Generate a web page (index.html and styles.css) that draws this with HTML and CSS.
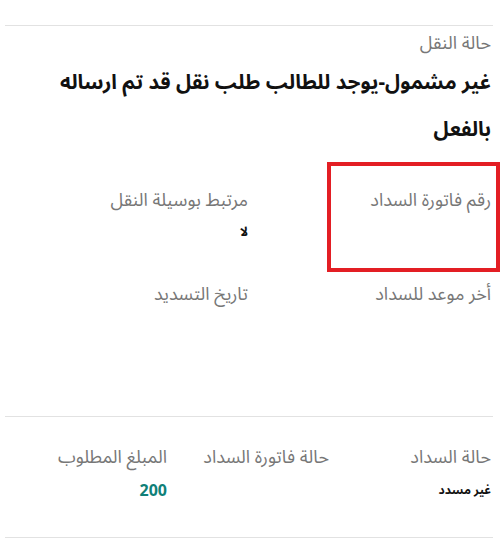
FILE: index.html
```html
<!DOCTYPE html>
<html lang="ar" dir="rtl">

<head>
    <meta charset="UTF-8">
    <meta name="viewport" content="width=device-width, initial-scale=1.0">
    <title>حالة النقل</title>
    <link rel="stylesheet" href="styles.css">
</head>

<body>

    <div class="page">

        <!-- بيانات النقل -->
        <section class="block transfer">
            <div class="field">
                <p class="label">حالة النقل</p>
                <h2 class="headline">غير مشمول-يوجد للطالب طلب نقل قد تم ارساله بالفعل</h2>
            </div>

            <div class="grid two">
                <div class="field">
                    <p class="label">رقم فاتورة السداد</p>
                    <p class="value"></p>
                </div>
                <div class="field">
                    <p class="label">مرتبط بوسيلة النقل</p>
                    <p class="value">لا</p>
                </div>
                <div class="field">
                    <p class="label">أخر موعد للسداد</p>
                    <p class="value"></p>
                </div>
                <div class="field">
                    <p class="label">تاريخ التسديد</p>
                    <p class="value"></p>
                </div>
            </div>
        </section>

        <!-- بيانات السداد -->
        <section class="block payment">
            <div class="grid three">
                <div class="field">
                    <p class="label">حالة السداد</p>
                    <p class="value small">غير مسدد</p>
                </div>
                <div class="field">
                    <p class="label">حالة فاتورة السداد</p>
                    <p class="value"></p>
                </div>
                <div class="field">
                    <p class="label">المبلغ المطلوب</p>
                    <p class="value amount">200</p>
                </div>
            </div>
        </section>

    </div>

    <div class="highlight"></div>

</body>

</html>
```

FILE: styles.css
```css
body {
    margin: 0;
    background: #ffffff;
    font-family: "Noto Sans Arabic", "Noto Sans", sans-serif;
    color: #111;
}

.page {
    margin: 25px 9px 0 5px;
}

.block {
    border-top: 1px solid #e2e2e2;
    padding-right: 2px;
}

.block.transfer {
    padding-top: 3px;
    padding-bottom: 78px;
}

.block.payment {
    padding-top: 26px;
    padding-bottom: 34px;
    border-bottom: 1px solid #e2e2e2;
}

.field p,
.field h2 {
    margin: 0;
}

.label {
    font-size: 18px;
    line-height: 28px;
    color: #777;
}

.headline {
    margin-top: 2px !important;
    font-size: 20.5px;
    line-height: 47px;
    font-weight: bold;
    color: #111;
}

.grid {
    display: grid;
}

.grid.two {
    grid-template-columns: 243px 243px;
    row-gap: 36px;
    margin-top: 33px;
}

.grid.three {
    grid-template-columns: repeat(3, 162px);
}

.value {
    margin-top: 6px !important;
    min-height: 24px;
    line-height: 24px;
    font-size: 13px;
    font-weight: bold;
    color: #111;
}

.payment .value {
    margin-top: 8px !important;
}

.value.small {
    font-size: 12px;
}

.value.amount {
    font-size: 16px;
    color: #0f8078;
}

.highlight {
    position: absolute;
    top: 162px;
    left: 327px;
    width: 165px;
    height: 102px;
    border: 4px solid #e31e24;
}
```
